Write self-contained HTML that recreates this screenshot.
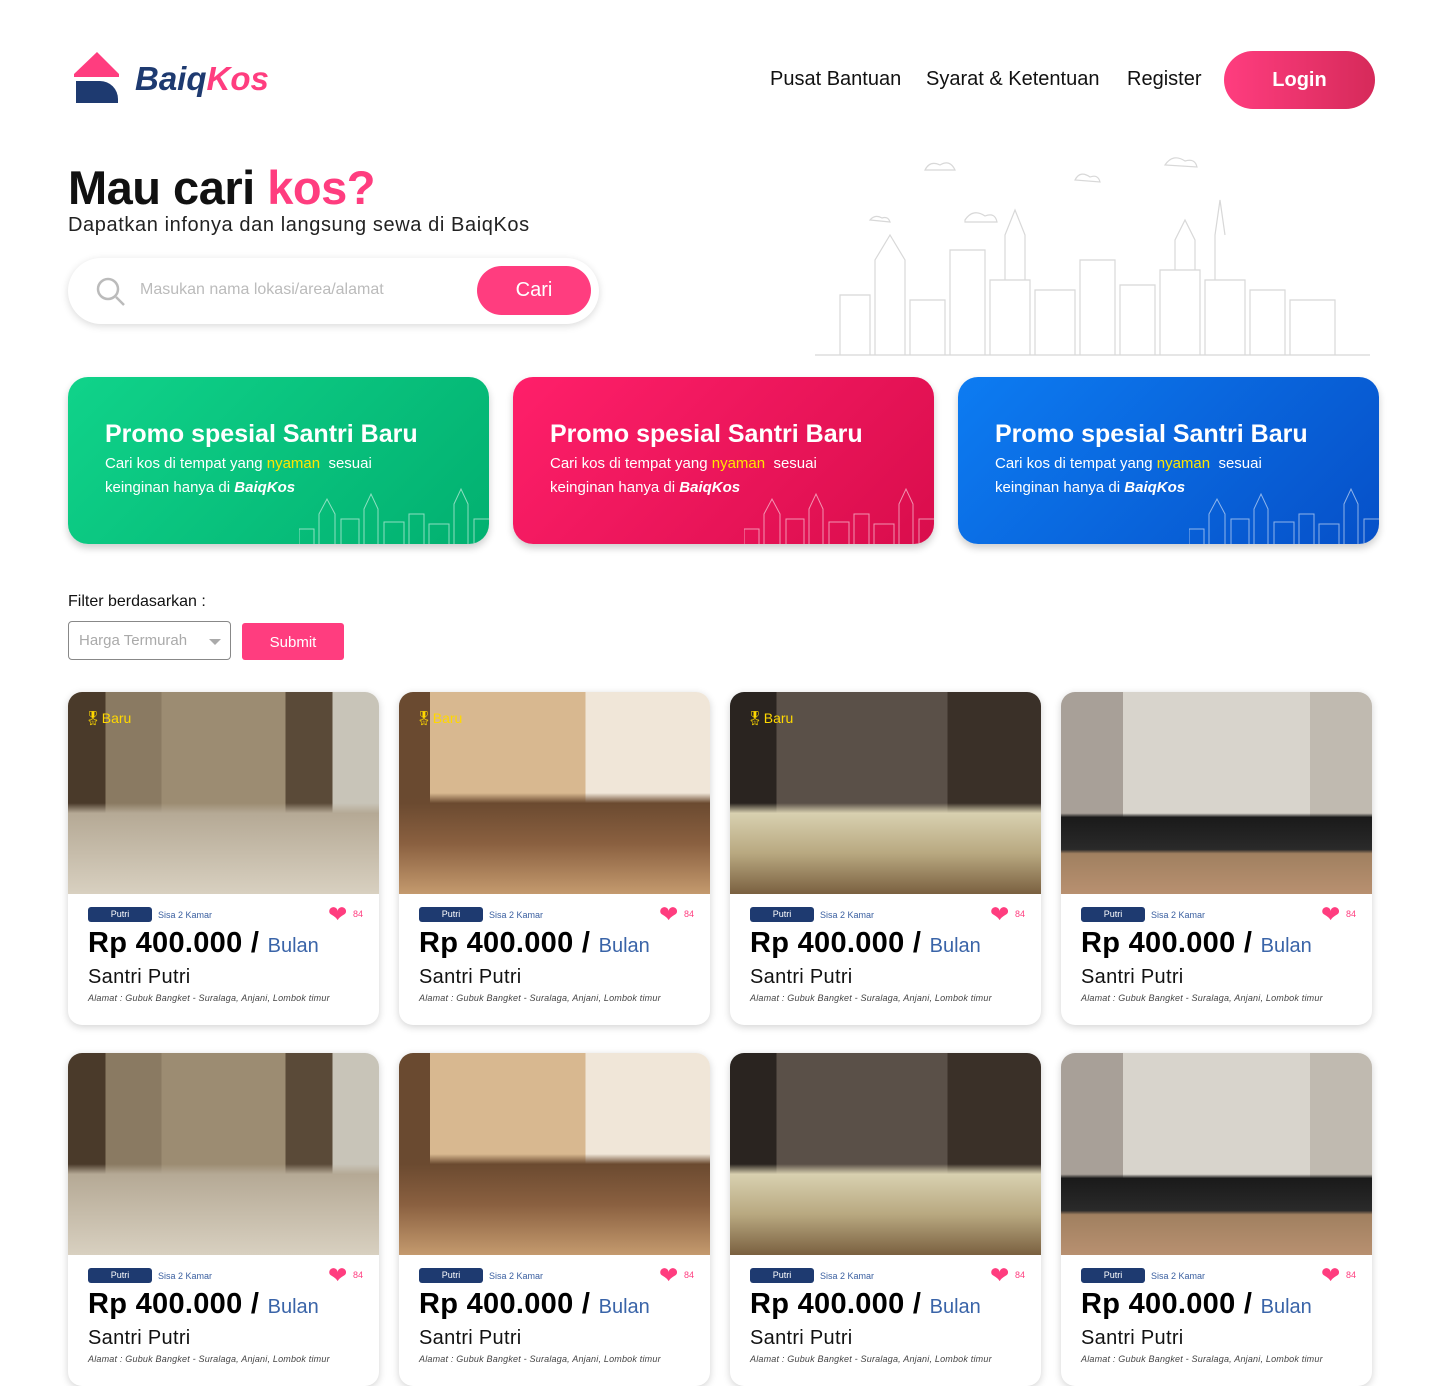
<!DOCTYPE html>
<html><head><meta charset="utf-8"><style>
*{margin:0;padding:0;box-sizing:border-box}
body{width:1440px;height:1381px;overflow:hidden;background:#fff;font-family:"Liberation Sans",sans-serif;color:#111;position:relative}
.abs{position:absolute}
.nav a{position:absolute;top:68px;font-size:20px;color:#111}
.login{left:1224px;top:51px;width:151px;height:58px;border-radius:29px;background:linear-gradient(90deg,#ff3d7f,#d62a5a);color:#fff;font-weight:bold;font-size:20px;text-align:center;line-height:58px}
h1{position:absolute;left:68px;top:160px;font-size:47px;font-weight:bold;letter-spacing:-0.5px}
.sub{left:68px;top:214px;font-size:20px;color:#222;letter-spacing:0.6px}
.search{left:68px;top:258px;width:531px;height:66px;border-radius:33px;background:#fff;box-shadow:0 2px 8px rgba(0,0,0,.15)}
.cari{position:absolute;left:409px;top:8px;width:114px;height:49px;border-radius:25px;background:#ff3d7f;color:#fff;font-size:20px;text-align:center;line-height:49px}
.promo{top:377px;width:421px;height:167px;border-radius:20px;overflow:hidden;box-shadow:0 4px 8px rgba(0,0,0,.2);color:#fff}
.promo b.t{position:absolute;left:37px;top:43px;font-size:25px}
.promo p{position:absolute;left:37px;top:75px;font-size:15px;line-height:24px}
.promo .y{color:#ffe600}
.promo svg{position:absolute;right:0;bottom:0}
.card{width:311px;height:333px;border-radius:14px;background:#fff;box-shadow:0 2px 8px rgba(0,0,0,.18);overflow:hidden}
.img{height:202px;position:relative}
.tag{position:absolute;left:20px;top:13px;width:64px;height:15px;background:#1e3a70;border-radius:3px;color:#fff;font-size:9px;text-align:center;line-height:15px}
.sisa{position:absolute;left:90px;top:16px;font-size:9px;color:#3a5fa0}
.heart{position:absolute;left:260px;top:9px;font-size:23px;color:#ff3d7f;line-height:23px}
.n84{position:absolute;left:285px;top:15px;font-size:9px;color:#ff3d7f}
.price{position:absolute;left:20px;top:33px;font-size:29px;font-weight:bold;color:#000;letter-spacing:0.3px}
.price span{font-weight:normal;color:#3a64a8;font-size:20px;letter-spacing:0}
.nm{position:absolute;left:20px;top:72px;font-size:20px;color:#111;letter-spacing:0.3px}
.addr{position:absolute;left:20px;top:99px;font-size:9px;font-style:italic;color:#444;letter-spacing:0.2px}
.baru{position:absolute;left:16px;top:18px;color:#ffd800;font-size:14px}
</style></head><body>
<svg class="abs" style="left:74px;top:52px" width="46" height="51"><polygon points="23,0 45,22 45,25 0,25 0,22" fill="#ff3d7f"/><path d="M2 29 H26 A18 18 0 0 1 44 47 V51 H2 Z" fill="#1e3a70"/></svg>
<div class="abs" style="left:135px;top:60px;font-size:33px;font-weight:bold;font-style:italic;color:#1e3a70">Baiq<span style="color:#ff3d7f">Kos</span></div>
<div class="nav"><a style="left:770px">Pusat Bantuan</a><a style="left:926px">Syarat &amp; Ketentuan</a><a style="left:1127px">Register</a></div>
<div class="abs login">Login</div>
<h1>Mau cari <span style="color:#ff3d7f">kos?</span></h1>
<div class="abs sub">Dapatkan infonya dan langsung sewa di BaiqKos</div>
<div class="abs search"><svg style="position:absolute;left:27px;top:18px" width="32" height="32"><circle cx="13" cy="13" r="10" fill="none" stroke="#bbb" stroke-width="2.5"/><line x1="21" y1="21" x2="29" y2="29" stroke="#bbb" stroke-width="2.5"/></svg><div style="position:absolute;left:72px;top:23px;font-size:16px;color:#bbb">Masukan nama lokasi/area/alamat</div><div class="cari">Cari</div></div>
<svg class="abs" style="left:815px;top:140px" width="555" height="220" fill="none" stroke="#d8d8d8" stroke-width="1.2">
<path d="M0 215 H555"/><path d="M25 215 V155 H55 V215 M60 215 V120 L75 95 L90 120 V215 M95 215 V160 H130 V215 M135 215 V110 H170 V215 M175 215 V140 H215 V215 M190 140 V95 L200 70 L210 95 V140 M220 215 V150 H260 V215 M265 215 V120 H300 V215 M305 215 V145 H340 V215 M345 215 V130 H385 V215 M360 130 V100 L370 80 L380 100 V130 M390 215 V140 H430 V215 M400 140 V95 L405 60 L410 95 M435 215 V150 H470 V215 M475 215 V160 H520 V215"/>
<path d="M110 30 q5 -10 15 -5 q10 -6 15 5 H110 Z M150 80 q8 -12 20 -4 q10 -4 12 6 H150 Z M260 40 q5 -10 15 -3 q8 -3 10 5 Z M350 25 q8 -12 20 -4 q10 -3 12 6 Z M55 80 q5 -6 12 -2 q6 -2 8 4 Z"/>
</svg>
<div class="abs promo" style="left:68px;background:linear-gradient(135deg,#10d38a,#02b070)"><b class="t">Promo spesial Santri Baru</b><p>Cari kos di tempat yang <span class="y">nyaman</span>&nbsp; sesuai<br>keinginan hanya di <b><i>BaiqKos</i></b></p><svg width="190" height="60" fill="none" stroke="rgba(255,255,255,.55)"><path d="M0 60 V45 H15 V60 M20 60 V30 L28 15 L36 30 V60 M42 60 V35 H60 V60 M65 60 V25 L72 10 L79 25 V60 M85 60 V38 H105 V60 M110 60 V30 H125 V60 M130 60 V40 H150 V60 M155 60 V20 L162 5 L169 20 V60 M175 60 V35 H190"/></svg></div>
<div class="abs promo" style="left:513px;background:linear-gradient(135deg,#ff1f6a,#d90d4c)"><b class="t">Promo spesial Santri Baru</b><p>Cari kos di tempat yang <span class="y">nyaman</span>&nbsp; sesuai<br>keinginan hanya di <b><i>BaiqKos</i></b></p><svg width="190" height="60" fill="none" stroke="rgba(255,255,255,.55)"><path d="M0 60 V45 H15 V60 M20 60 V30 L28 15 L36 30 V60 M42 60 V35 H60 V60 M65 60 V25 L72 10 L79 25 V60 M85 60 V38 H105 V60 M110 60 V30 H125 V60 M130 60 V40 H150 V60 M155 60 V20 L162 5 L169 20 V60 M175 60 V35 H190"/></svg></div>
<div class="abs promo" style="left:958px;background:linear-gradient(135deg,#0d7cf2,#0650c8)"><b class="t">Promo spesial Santri Baru</b><p>Cari kos di tempat yang <span class="y">nyaman</span>&nbsp; sesuai<br>keinginan hanya di <b><i>BaiqKos</i></b></p><svg width="190" height="60" fill="none" stroke="rgba(255,255,255,.55)"><path d="M0 60 V45 H15 V60 M20 60 V30 L28 15 L36 30 V60 M42 60 V35 H60 V60 M65 60 V25 L72 10 L79 25 V60 M85 60 V38 H105 V60 M110 60 V30 H125 V60 M130 60 V40 H150 V60 M155 60 V20 L162 5 L169 20 V60 M175 60 V35 H190"/></svg></div>
<div class="abs" style="left:68px;top:593px;font-size:16px">Filter berdasarkan :</div>
<div class="abs" style="left:68px;top:621px;width:163px;height:39px;border:1px solid #888;border-radius:4px;font-size:15px;color:#aaa;padding:10px 0 0 10px">Harga Termurah<span style="position:absolute;right:9px;top:17px;border:6px solid transparent;border-top-color:#aaa"></span></div>
<div class="abs" style="left:242px;top:623px;width:102px;height:37px;background:#ff3d7f;border-radius:3px;color:#fff;font-size:15px;text-align:center;line-height:39px">Submit</div>

<div id="cards"></div>
<script>
var imgs=[
"linear-gradient(180deg,rgba(0,0,0,0) 55%,#b5a995 60%,#d8d0c0 100%),linear-gradient(90deg,#4a3a2a 0 12%,#8a7a62 12% 30%,#9c8c72 30% 70%,#5a4a38 70% 85%,#c8c4b8 85%)",
"linear-gradient(180deg,rgba(0,0,0,0) 50%,#6b4a30 55%,#8a6040 75%,#c49a6e 100%),linear-gradient(90deg,#6a4a30 0 10%,#d8b890 10% 60%,#f0e6d8 60% 100%)",
"linear-gradient(180deg,rgba(0,0,0,0) 55%,#d8d0b0 60%,#b8a880 80%,#7a6040 100%),linear-gradient(90deg,#2a2420 0 15%,#5a5048 15% 70%,#3a3028 70% 100%)",
"linear-gradient(180deg,rgba(0,0,0,0) 60%,#1a1a1a 62%,#2a2a2a 78%,#a08060 80%,#b89070 100%),linear-gradient(90deg,#a8a098 0 20%,#d8d4cc 20% 80%,#c0bab0 80%)"];
var lefts=[68,399,730,1061],tops=[692,1053],h="";
tops.forEach(function(t,r){lefts.forEach(function(l,i){
h+='<div class="abs card" style="left:'+l+'px;top:'+t+'px"><div class="img" style="background:'+imgs[i]+'">'+(r==0&&i<3?'<div class="baru">&#127894;Baru</div>':'')+'</div><div style="position:relative"><div class="tag">Putri</div><div class="sisa">Sisa 2 Kamar</div><div class="heart">&#10084;</div><div class="n84">84</div><div class="price">Rp 400.000 / <span>Bulan</span></div><div class="nm">Santri Putri</div><div class="addr">Alamat : Gubuk Bangket - Suralaga, Anjani, Lombok timur</div></div></div>';
});});
document.getElementById("cards").innerHTML=h;
</script>
</body></html>
